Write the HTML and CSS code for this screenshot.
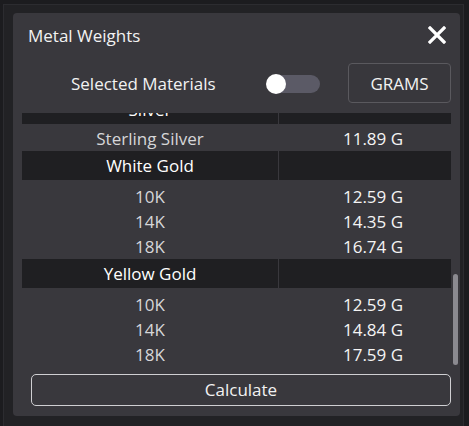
FILE: index.html
```html
<!DOCTYPE html>
<html>
<head>
<meta charset="utf-8">
<link rel="stylesheet" href="styles.css">
</head>
<body>
<div class="frame">
  <div class="panel">
    <div class="titlebar">
      <span class="title">Metal Weights</span>
      <svg class="close" width="18" height="18" viewBox="0 0 18 18"><path d="M2 2 L16 16 M16 2 L2 16" stroke="#fff" stroke-width="3.2" stroke-linecap="square"/></svg>
    </div>
    <div class="controls">
      <span class="label">Selected Materials</span>
      <span class="toggle"><span class="knob"></span></span>
      <button class="units">GRAMS</button>
    </div>
    <div class="scroller">
      <div class="viewport">
        <div class="table">
          <div class="hdr"><span class="hcell">Silver</span><span class="hcell"></span></div>
          <div class="group group-single">
            <span class="name">Sterling Silver</span><span class="val">11.89 G</span>
          </div>
          <div class="hdr"><span class="hcell">White Gold</span><span class="hcell"></span></div>
          <div class="group">
            <span class="name">10K</span><span class="val">12.59 G</span>
            <span class="name">14K</span><span class="val">14.35 G</span>
            <span class="name">18K</span><span class="val">16.74 G</span>
          </div>
          <div class="hdr"><span class="hcell">Yellow Gold</span><span class="hcell"></span></div>
          <div class="group">
            <span class="name">10K</span><span class="val">12.59 G</span>
            <span class="name">14K</span><span class="val">14.84 G</span>
            <span class="name">18K</span><span class="val">17.59 G</span>
          </div>
        </div>
      </div>
      <div class="track"><div class="thumb"></div></div>
    </div>
    <div class="footer">
      <button class="calc">Calculate</button>
    </div>
  </div>
</div>
</body>
</html>
```
FILE: styles.css
```css
* { box-sizing: border-box; }
html, body { margin: 0; padding: 0; }
body {
  background: #1c1c1f;
  width: 469px;
  height: 426px;
  overflow: hidden;
  font-family: "Open Sans", "Noto Sans", sans-serif;
  color: #f2f2f2;
}
.frame {
  margin: 4px 5px 0 3px;
  border: 1px solid #2c2c30;
  border-bottom: none;
  background: #222225;
  height: 422px;
  padding: 8px 2px 0 9px;
}
.panel {
  width: 447px;
  height: 403px;
  background: #39383d;
  border-radius: 4px;
  display: flex;
  flex-direction: column;
}
.titlebar {
  height: 43px;
  display: flex;
  align-items: center;
  justify-content: space-between;
  padding: 1px 14px 0 15px;
}
.title {
  font-size: 17px;
}
.close { display: block; }
.controls {
  height: 57px;
  display: flex;
  align-items: center;
  padding: 0 9px 3px 58px;
}
.label {
  font-size: 17px;
  width: 195px;
  margin-top: 1px;
}
.toggle {
  position: relative;
  width: 50px;
  height: 18px;
  border-radius: 9px;
  background: #5b5a66;
  margin-left: 4px;
  margin-top: 2px;
}
.knob {
  position: absolute;
  left: -4px;
  top: -1px;
  width: 20px;
  height: 20px;
  border-radius: 50%;
  background: #fff;
}
.units {
  margin-left: auto;
  width: 103px;
  height: 40px;
  background: #38373c;
  border: 1px solid #5a595e;
  border-radius: 4px;
  color: #f2f2f2;
  font-family: inherit;
  font-size: 17px;
  padding: 0;
}
.scroller {
  display: flex;
  height: 252px;
  padding-left: 9px;
}
.viewport {
  width: 429px;
  height: 252px;
  overflow: hidden;
}
.table {
  margin-top: -18px;
}
.hdr {
  display: grid;
  grid-template-columns: 256px 1fr;
  column-gap: 1px;
  height: 29px;
}
.hcell {
  background: #1f1f22;
  display: flex;
  align-items: center;
  justify-content: center;
  font-size: 17px;
  color: #fff;
}
.group {
  display: grid;
  grid-template-columns: 256px 1fr;
  column-gap: 1px;
  grid-auto-rows: 25px;
  padding-top: 4px;
}
.group-single { padding-top: 2px; }
.name, .val {
  display: flex;
  align-items: center;
  justify-content: center;
  font-size: 17px;
}
.name { color: #d6d6d8; }
.val { color: #f4f4f4; padding-left: 16px; }
.track {
  width: 9px;
  position: relative;
}
.thumb {
  position: absolute;
  left: 2px;
  top: 161px;
  width: 5px;
  height: 91px;
  border-radius: 3px;
  background: #8b8a90;
}
.footer {
  padding: 9px 9px 0 18px;
}
.calc {
  width: 420px;
  height: 32px;
  background: #39383d;
  border: 1.5px solid #cfcfd2;
  border-radius: 5px;
  color: #f2f2f2;
  font-family: inherit;
  font-size: 17px;
  padding: 0 0 1px;
}
```
